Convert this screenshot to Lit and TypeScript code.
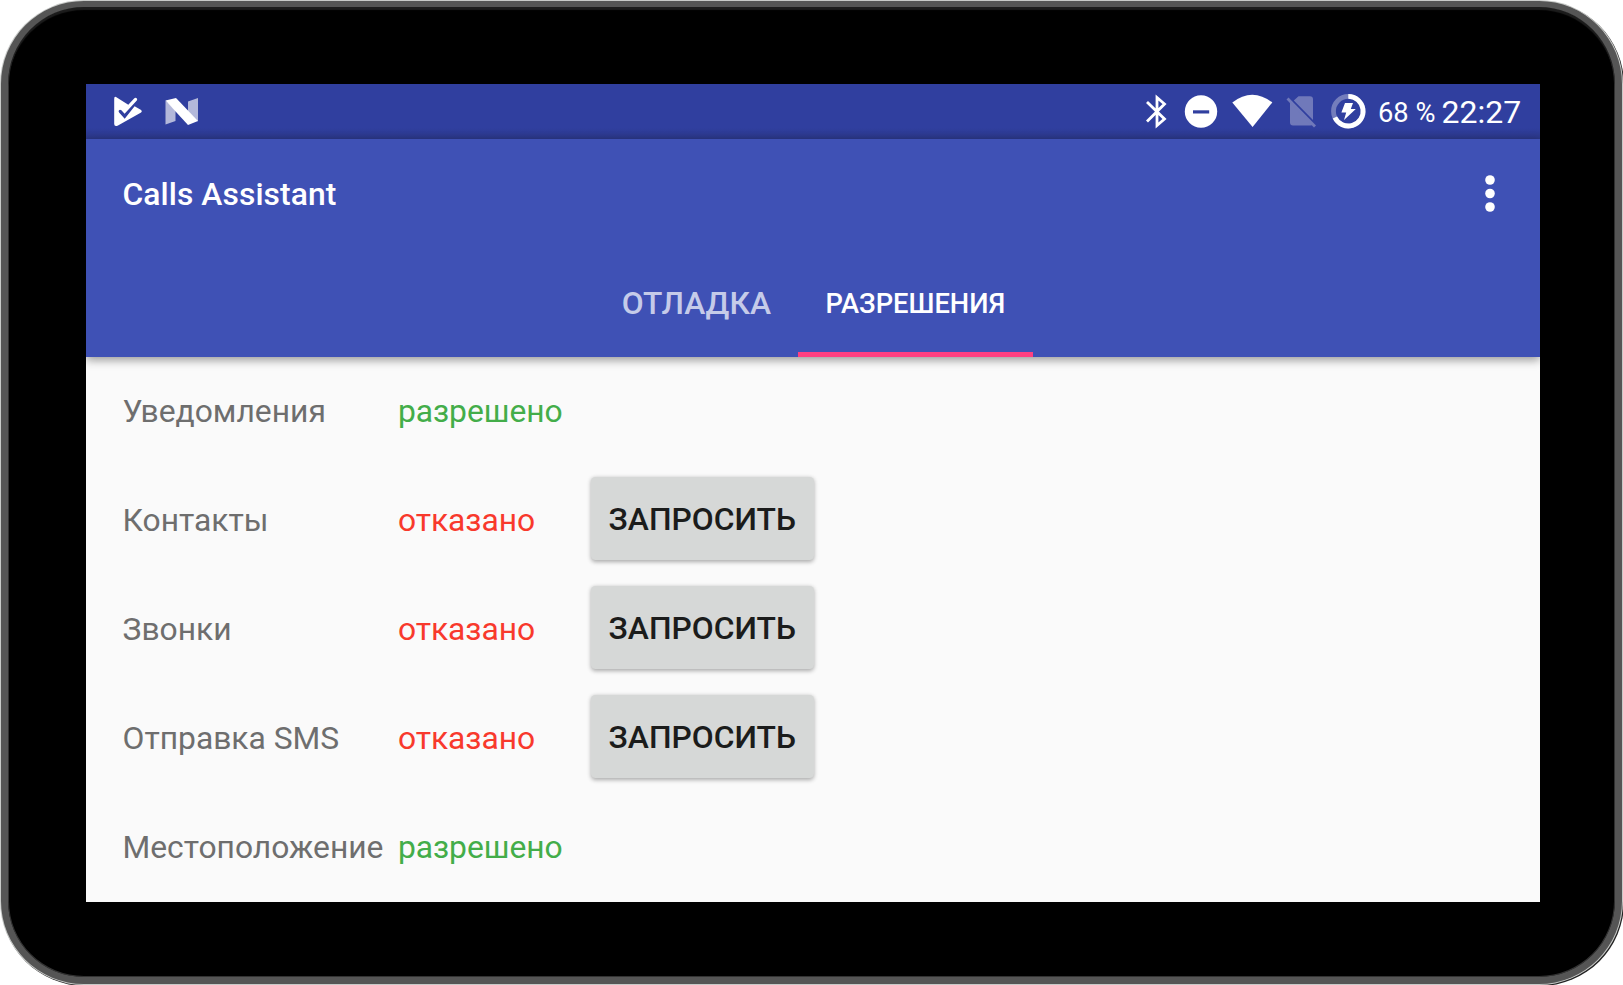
import { LitElement, html, css, svg } from "lit";
import { customElement } from "lit/decorators.js";

interface Permission { name: string; granted: boolean; tight?: boolean; }

const PERMISSIONS: Permission[] = [
  { name: "Уведомления", granted: true, tight: true },
  { name: "Контакты", granted: false },
  { name: "Звонки", granted: false },
  { name: "Отправка SMS", granted: false },
  { name: "Местоположение", granted: true },
];

@customElement("status-bar")
class StatusBar extends LitElement {
  static styles = css`
    :host { display: flex; box-sizing: border-box; height: 54.5px; background: linear-gradient(#303f9f 0, #303f9f 44px, #2b3788 54.5px); color: #fff; }
    .icons { display: block; flex: none; }
    .gap { flex: 1; }
    .battery { font-size: 27.300px; line-height: 58px; margin-left: 8px; width: 63.500px; white-space: nowrap; }
    .clock { font-size: 32px; line-height: 57px; width: 98.500px; white-space: nowrap; }
  `;
  render() {
    return html`
      <svg class="icons" width="134" height="54" viewBox="86 84 134 54">
        <path fill="#fff" d="M116 97l12.300 7.800 5.800-6.400q1.500-1.200 2.600-.1 1 1.100.1 2.300l-12.200 13.200-3.200-3.500q-1.500-1.100-2.400 0-.9 1 .1 2.200l5.600 6.200 9.900-12.500 6.500 3.800q1.500 1 0 2.500L118 125.500q-3.700 1.500-3.800-1.500V99q0-3 1.800-2z"/>
        <path fill="#b3b8da" d="M165.500 100.500v24l10-3.500v-11zM198 98l-10 3.500v10l10 10z"/>
        <path fill="#fff" d="M165.500 100.500L176 98l22 23-10 4z"/>
      </svg>
      <div class="gap"></div>
      <svg class="icons" width="230" height="54" viewBox="1140 84 230 54">
        <g fill="none" stroke="#fff" stroke-width="2.800"><path d="M1147 102l17.500 17-7.500 6.500V97.500l7.500 6.500-17.500 17.500"/></g>
        <circle cx="1201" cy="111.500" r="16.200" fill="#fff"/><path fill="#303f9f" d="M1193 110.300h16.200v3.200H1193z"/>
        <path fill="#fff" d="M1232.300 102.500q20-15.500 40 0L1252.600 127z"/>
        <path fill="#7079ba" d="M1298.500 96.300h11.500q3 0 3 3v20.700L1293.800 100.600zM1290 101v21.500q0 3 3 3h17.500q1.500 0 2.300-.8z"/>
        <path stroke="#7079ba" stroke-width="2.800" d="M1287.500 98.500l27.500 28"/>
        <circle cx="1348.300" cy="111.200" r="14.800" fill="none" stroke="#747dbc" stroke-width="4.800"/>
        <path fill="none" stroke="#fff" stroke-width="4.800" d="M1348.300 96.400a14.800 14.800 0 1 1-13.400 21.100"/>
        <path fill="#fff" d="M1345 103h8l-2.200 6h5l-11.800 11 2.200-7.500h-4.800z"/>
      </svg>
      <span class="battery">68 %</span><span class="clock">22:27</span>
    `;
  }
}

@customElement("permission-row")
class PermissionRow extends LitElement {
  static properties = { item: { attribute: false } };
  declare item: Permission;
  static styles = css`
    :host { display: grid; grid-template-columns: 275.5px 192.500px 223.500px; align-items: center; height: 109.050px; padding-left: 36.500px; font-size: 31.800px; color: #6e6e6e; white-space: nowrap; }
    .tight::first-letter { letter-spacing: -2px; }
    .ok { color: #43ad49; }
    .no { color: #f8392c; }
    .ok, .no { letter-spacing: -0.060px; }
    .request { font: 500 31.800px/83px Roboto, sans-serif; height: 83px; box-sizing: border-box; border: 0; padding: 1px 0 0; margin: 0 0 3px 0; border-radius: 4.500px; background: #d6d8d7; color: #1b1c1b; box-shadow: 0 1.500px 4px rgba(0,0,0,.32); }
  `;
  render() {
    return html`<span class=${this.item.tight ? "tight" : ""}>${this.item.name}</span>
      <span class=${this.item.granted ? "ok" : "no"}>${this.item.granted ? "разрешено" : "отказано"}</span>
      ${this.item.granted ? "" : html`<button class="request">ЗАПРОСИТЬ</button>`}`;
  }
}

@customElement("app-root")
class AppRoot extends LitElement {
  static styles = css`
    :host { display: block; box-sizing: border-box; width: 1623px; height: 985px; padding: 1px 0 0 1px; background: #fff; font-family: Roboto, sans-serif; overflow: hidden; }
    .bezel { box-sizing: border-box; width: 1621px; height: 983px; border-radius: 83px; background: #000; border: 7px solid #555; border-top-width: 6px; box-shadow: inset 0 3px 1px #1c1c1c, inset 0 0 0 1px #333, 0 0 0 1px #c8cac8, 1px 1px 0 1px #222; padding: 77px 0 0 78px; }
    .screen { width: 1454px; height: 818px; background: #fafafa; overflow: hidden; }
    .header { background: #3f51b5; height: 218px; box-shadow: 0 3px 9px rgba(0,0,0,.4); display: flex; flex-direction: column; }
    .toolbar { box-sizing: border-box; height: 109px; display: flex; align-items: center; justify-content: space-between; padding: 2px 43.500px 0 36.500px; color: #fff; }
    .title { font-size: 31.800px; font-weight: 500; letter-spacing: 0.080px; }
    .tabs { height: 109px; display: flex; justify-content: center; padding-left: 1px; }
    .tab { box-sizing: border-box; padding: 0 27.300px; height: 109px; line-height: 110px; font-size: 31.800px; font-weight: 500; color: #c5cbe9; white-space: nowrap; }
    .active { font-size: 27.300px; line-height: 113px; color: #fff; border-bottom: 5px solid #ff4081; }
  `;
  render() {
    return html`<div class="bezel"><main class="screen">
      <status-bar></status-bar>
      <header class="header">
        <div class="toolbar"><span class="title">Calls Assistant</span>
          <svg width="14" height="40" viewBox="0 0 14 40" fill="#fff">${[6, 19.5, 33].map((y) => svg`<circle cx="7" cy=${y} r="4.800"/>`)}</svg></div>
        <nav class="tabs"><div class="tab">ОТЛАДКА</div><div class="tab active">РАЗРЕШЕНИЯ</div></nav>
      </header>
      <section>${PERMISSIONS.map((p) => html`<permission-row .item=${p}></permission-row>`)}</section>
    </main></div>`;
  }
}
